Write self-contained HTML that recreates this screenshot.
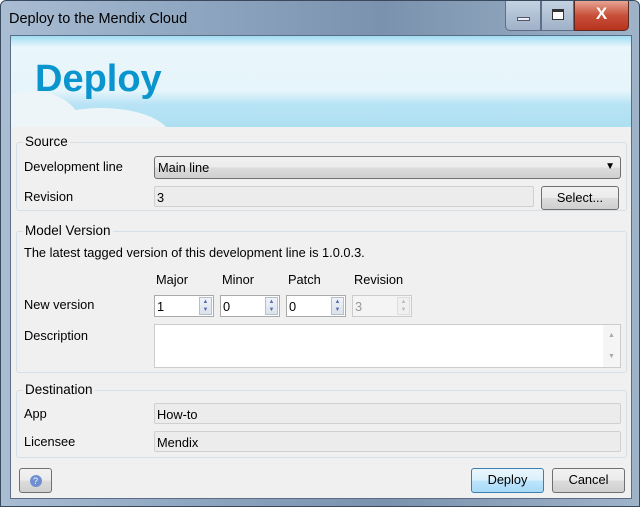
<!DOCTYPE html>
<html><head><style>
*{box-sizing:border-box;margin:0;padding:0}
body{width:640px;height:507px;overflow:hidden;font-family:"Liberation Sans",sans-serif;font-size:12.8px;color:#000;background:#fff}
.win{position:absolute;left:0;top:0;width:640px;height:507px;border:1px solid #3a4a5e;border-radius:6px 6px 0 0;background:linear-gradient(90deg,#a9bdd3 0%,#8ea6c0 30%,#7a92ad 60%,#9fb3c9 100%)}
.title{position:absolute;left:8px;top:10px;font-size:14.5px;color:#000}
.client{position:absolute;left:9px;top:34px;width:622px;height:464px;background:#f0f0f0;border:1px solid #5a6d85}
.banner{position:absolute;left:0;top:0;width:620px;height:91px;background:linear-gradient(180deg,#9fdcf3 0%,#e9f6fc 12%,#e6f5fb 60%,#b8e3f4 75%,#ade0f2 100%);overflow:hidden}
.banner .t{position:absolute;left:24px;top:22px;font-size:38px;font-weight:bold;color:#0a95cf}
.cloud{position:absolute;border-radius:50%;background:#eef5f8}
.a{position:absolute}
.grp{position:absolute;border:1px solid #d5dfe5;border-radius:3px}
.gl{position:absolute;background:#f0f0f0;padding:0 2px;font-size:13.5px;top:-9px;left:6px}
.ro{position:absolute;height:21px;border:1px solid #d0d0d0;background:#ececec;padding:3px 2px;border-radius:2px}
.btn{position:absolute;height:24px;border:1px solid #707070;border-radius:3px;background:linear-gradient(#f2f2f2,#ebebeb 50%,#dddddd 50%,#cfcfcf);text-align:center;line-height:22px}
.spin{position:absolute;width:60px;height:22px;border:1px solid #aaa;background:#fff;padding:3px 2px}
.spin .s{position:absolute;right:1px;top:1px;width:13px;height:18px;border:1px solid #b6c0cc;background:linear-gradient(#f0f3f8,#dce3ec);font-size:6px;line-height:8px;text-align:center;color:#5a6fb0}
</style></head><body>
<div class="win">
<div class="title">Deploy to the Mendix Cloud</div>
<div class="a" style="left:504px;top:0;width:36px;height:30px;border:1px solid #5d6e86;border-top:none;border-radius:0 0 0 5px;background:linear-gradient(#c4d2e2,#9fb1c8)"><div class="a" style="left:11px;top:16px;width:13px;height:4px;background:#e8eef5;border:1px solid #556"></div></div>
<div class="a" style="left:540px;top:0;width:33px;height:30px;border:1px solid #5d6e86;border-top:none;background:linear-gradient(#c4d2e2,#9fb1c8)"><div class="a" style="left:10px;top:8px;width:12px;height:11px;border:1px solid #333;border-top-width:3px;background:#fff"></div></div>
<div class="a" style="left:573px;top:0;width:55px;height:30px;border:1px solid #5d2a22;border-top:none;border-radius:0 0 5px 0;background:linear-gradient(#e8a493,#c7503a 50%,#b8331c);color:#fff;font-weight:bold;font-size:17px;text-align:center;line-height:26px">X</div>
<div class="client">
<div class="banner">
<div class="cloud" style="left:-30px;top:55px;width:100px;height:70px"></div>
<div class="cloud" style="left:20px;top:72px;width:140px;height:60px"></div>
<div class="t">Deploy</div>
</div>
<div class="grp" style="left:5px;top:106px;width:611px;height:69px"><span class="gl">Source</span></div>
<div class="a" style="left:13px;top:123px">Development line</div>
<div class="a" style="left:143px;top:120px;width:467px;height:23px;border:1px solid #707070;border-radius:3px;background:linear-gradient(#f2f2f2,#ebebeb 50%,#dddddd 50%,#cfcfcf);padding:3px 3px">Main line<span style="position:absolute;right:5px;top:4px;font-size:10px">▼</span></div>
<div class="a" style="left:13px;top:153px">Revision</div>
<div class="ro" style="left:143px;top:150px;width:380px">3</div>
<div class="btn" style="left:530px;top:150px;width:78px">Select...</div>

<div class="grp" style="left:5px;top:195px;width:611px;height:142px"><span class="gl">Model Version</span></div>
<div class="a" style="left:13px;top:209px">The latest tagged version of this development line is 1.0.0.3.</div>
<div class="a" style="left:145px;top:236px">Major</div>
<div class="a" style="left:211px;top:236px">Minor</div>
<div class="a" style="left:277px;top:236px">Patch</div>
<div class="a" style="left:343px;top:236px">Revision</div>
<div class="a" style="left:13px;top:261px">New version</div>
<div class="spin" style="left:143px;top:259px">1<div class="s">▲<br>▼</div></div>
<div class="spin" style="left:209px;top:259px">0<div class="s">▲<br>▼</div></div>
<div class="spin" style="left:275px;top:259px">0<div class="s">▲<br>▼</div></div>
<div class="spin" style="left:341px;top:259px;background:#f4f4f4;color:#999;border-color:#ccc">3<div class="s" style="background:#f0f0f0;border-color:#ddd;color:#bbb">▲<br>▼</div></div>
<div class="a" style="left:13px;top:292px">Description</div>
<div class="a" style="left:143px;top:288px;width:467px;height:44px;border:1px solid #ccc;background:#fff"><div class="a" style="right:0;top:0;width:17px;height:42px;background:#f5f5f5;color:#aaa;font-size:7px;text-align:center;line-height:21px">▲<br>▼</div></div>

<div class="grp" style="left:5px;top:354px;width:611px;height:68px"><span class="gl">Destination</span></div>
<div class="a" style="left:13px;top:370px">App</div>
<div class="ro" style="left:143px;top:367px;width:467px">How-to</div>
<div class="a" style="left:13px;top:398px">Licensee</div>
<div class="ro" style="left:143px;top:395px;width:467px">Mendix</div>

<div class="btn" style="left:8px;top:432px;width:33px;height:25px"><span style="display:inline-block;width:12px;height:12px;border-radius:50%;background:#6f8fd0;color:#fff;font-size:9px;line-height:12px;margin-top:6px">?</span></div>
<div class="btn" style="left:460px;top:432px;width:73px;height:25px;border-color:#3c7fb1;background:linear-gradient(#eaf6fd,#d9f0fc 50%,#bee6fd 50%,#a7d9f5)">Deploy</div>
<div class="btn" style="left:541px;top:432px;width:73px;height:25px">Cancel</div>
</div>
</div>
</body></html>
